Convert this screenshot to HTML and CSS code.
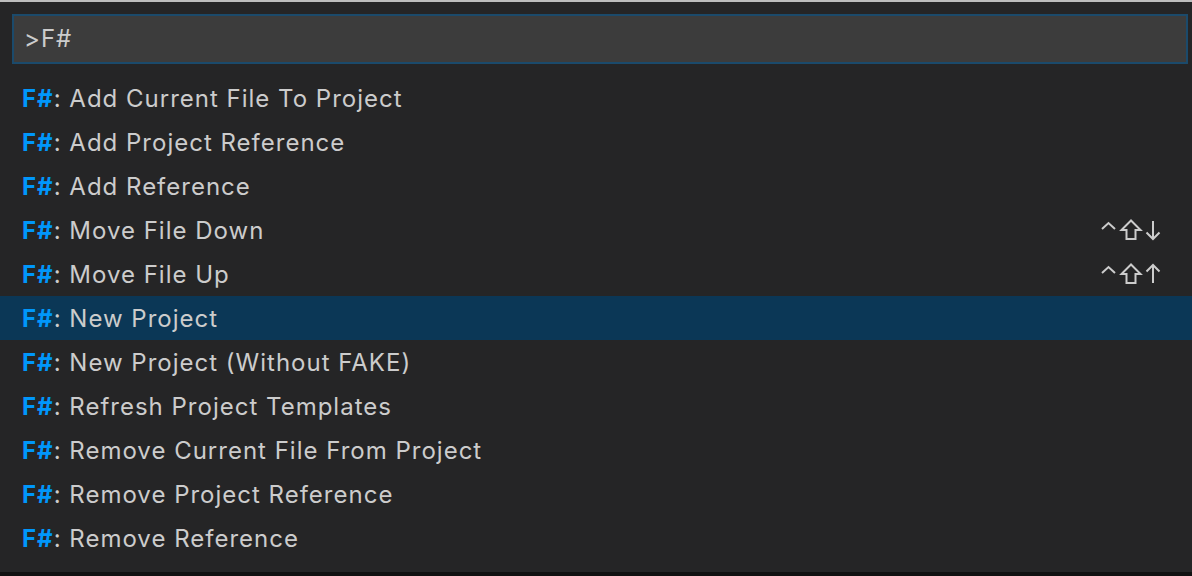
FILE: index.html
```html
<!DOCTYPE html>
<html>
<head>
<meta charset="utf-8">
<link rel="stylesheet" href="styles.css">
</head>
<body>
<div class="palette">
  <div class="input-wrap"><div class="input">&gt;F#</div></div>
  <ul class="list">
    <li class="row"><span class="label"><b>F#</b>: Add Current File To Project</span></li>
    <li class="row"><span class="label"><b>F#</b>: Add Project Reference</span></li>
    <li class="row"><span class="label"><b>F#</b>: Add Reference</span></li>
    <li class="row"><span class="label"><b>F#</b>: Move File Down</span>
      <svg class="keys" width="64" height="24" viewBox="0 0 64 24" fill="none" stroke="#cccccc" stroke-width="2">
        <path d="M2 11 L8.5 5 L15 11"/>
        <path d="M31 2.5 L21.5 12 L26.5 12 L26.5 21 L35.5 21 L35.5 12 L40.5 12 Z" stroke-linejoin="miter"/>
        <path d="M53 3 L53 21 M46.5 14.5 L53 21 L59.5 14.5"/>
      </svg>
    </li>
    <li class="row"><span class="label"><b>F#</b>: Move File Up</span>
      <svg class="keys" width="64" height="24" viewBox="0 0 64 24" fill="none" stroke="#cccccc" stroke-width="2">
        <path d="M2 11 L8.5 5 L15 11"/>
        <path d="M31 2.5 L21.5 12 L26.5 12 L26.5 21 L35.5 21 L35.5 12 L40.5 12 Z" stroke-linejoin="miter"/>
        <path d="M53 21 L53 3 M46.5 9.5 L53 3 L59.5 9.5"/>
      </svg>
    </li>
    <li class="row selected"><span class="label"><b>F#</b>: New Project</span></li>
    <li class="row"><span class="label"><b>F#</b>: New Project (Without FAKE)</span></li>
    <li class="row"><span class="label"><b>F#</b>: Refresh Project Templates</span></li>
    <li class="row"><span class="label"><b>F#</b>: Remove Current File From Project</span></li>
    <li class="row"><span class="label"><b>F#</b>: Remove Project Reference</span></li>
    <li class="row"><span class="label"><b>F#</b>: Remove Reference</span></li>
  </ul>
</div>
<div class="bottom"></div>
</body>
</html>
```
FILE: styles.css
```css
html, body {
  margin: 0;
  padding: 0;
  background: #252526;
  height: 576px;
  overflow: hidden;
}
body {
  font-family: Inter, "Noto Sans", "Liberation Sans", sans-serif;
  color: #cccccc;
  display: flex;
  flex-direction: column;
}
.palette {
  border-top: 2px solid #bdbdbd;
  height: 572px;
  box-sizing: border-box;
  padding-top: 12px;
  display: flex;
  flex-direction: column;
}
.input-wrap {
  padding: 0 4px 0 12px;
}
.input {
  height: 50px;
  box-sizing: border-box;
  border: 2px solid #1b4a6b;
  background: #3c3c3c;
  font-size: 24px;
  line-height: 46px;
  padding-left: 10px;
  letter-spacing: 1px;
  color: #cccccc;
}
.list {
  list-style: none;
  margin: 12px 0 0 0;
  padding: 0;
}
.row {
  height: 44px;
  display: flex;
  align-items: center;
  justify-content: space-between;
  padding: 0 28px 0 22px;
  font-size: 24px;
  letter-spacing: 1px;
}
.row b {
  color: #0097fb;
  font-weight: 700;
}
.row.selected {
  background: #0b3756;
}
.keys {
  display: block;
}
.bottom {
  height: 4px;
  background: #111111;
}
```
